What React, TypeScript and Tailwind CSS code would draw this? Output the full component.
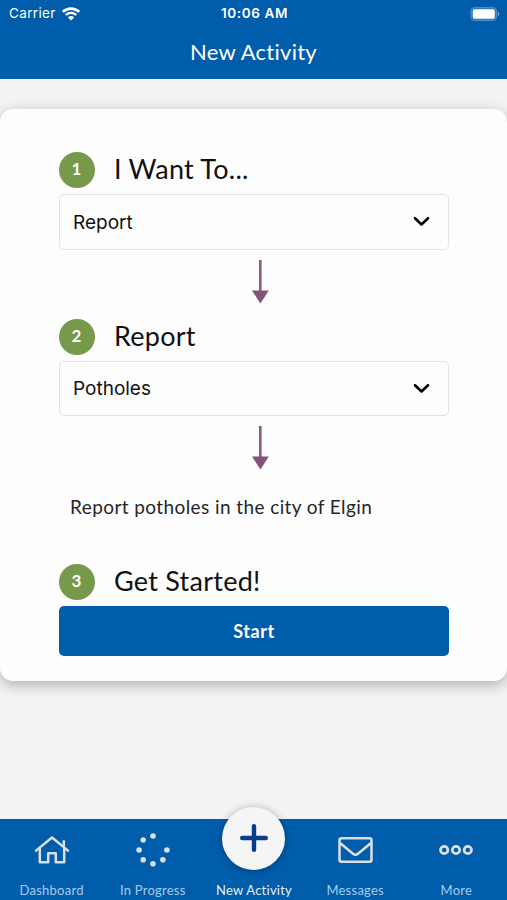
import type { ReactNode } from "react";

function StatusBar() {
  return (
    <div className="grid grid-cols-3 items-center h-7 pl-[9px] pr-[7px] font-['Inter',sans-serif] text-[13.5px] leading-none">
      <div className="flex items-center gap-1.5">
        <span className="w-[47px] whitespace-nowrap tracking-[0.35px]">Carrier</span>
        <svg width="18" height="14" viewBox="0 0 18 14" fill="none" stroke="#fff">
          <path d="M0.8 4.9a11.8 11.8 0 0 1 16.4 0" strokeWidth="2.6" />
          <path d="M3.8 8a7.5 7.5 0 0 1 10.4 0" strokeWidth="2.3" />
          <path d="M5.9 10.4a4.5 4.5 0 0 1 6.2 0L9 13.6z" fill="#fff" stroke="none" />
        </svg>
      </div>
      <span className="text-center font-semibold text-[13.5px] tracking-[0.6px]">10:06 AM</span>
      <svg className="justify-self-end" width="30" height="15" viewBox="0 0 30 15">
        <rect x="0.9" y="0.4" width="25.8" height="13.2" rx="3.8" fill="#2f7ac0" stroke="#5d99d0" strokeWidth="0.8" />
        <rect x="2.8" y="2.3" width="22" height="9.4" rx="1.6" fill="#fff" />
        <path d="M27.9 4.8v4.4c1.8-.6 1.8-3.8 0-4.4z" fill="#6da3d6" />
      </svg>
    </div>
  );
}

function StepTitle({ number, children }: { number: number; children: ReactNode }) {
  return (
    <div className="flex items-center h-9 gap-[19px]">
      <span className="flex items-center justify-center size-9 rounded-full bg-[#76994b] text-white text-[17px] font-bold pb-0.5 pr-px">
        {number}
      </span>
      <h2 className="text-[27px] leading-9 pb-0.5 tracking-[0.25px] whitespace-nowrap">{children}</h2>
    </div>
  );
}

function SelectBox({ value }: { value: string }) {
  return (
    <button className="flex items-center justify-between w-full h-[55.5px] pl-[13px] pr-[18px] mt-1.5 rounded-[5px] border-[1.5px] border-[#e4e4e4] font-['Inter',sans-serif] text-[19px]">
      <span className="pt-0.5">{value}</span>
      <svg width="17" height="11" viewBox="0 0 17 11" fill="none" stroke="#000" strokeWidth="2.6" strokeLinecap="round" strokeLinejoin="round">
        <path d="M2 2.2 8.5 8.5 15 2.2" />
      </svg>
    </button>
  );
}

function DownArrow() {
  return (
    <svg className="ml-[193px] mt-2.5" width="17" height="44" viewBox="0 0 17 44">
      <path d="M8.3 0v32" stroke="#8d5b80" strokeWidth="2.6" />
      <path d="M0 30.5h16.8L8.4 43.6z" fill="#87527a" />
    </svg>
  );
}

function Tab({ label, active, children }: { label: string; active?: boolean; children?: ReactNode }) {
  return (
    <div className={active ? "flex flex-col items-center text-[#e5effa]" : "flex flex-col items-center text-[#a9c9e9]"}>
      <div className="h-[62px] flex items-center justify-center">{children}</div>
      <span className="text-[13px] leading-[18px] whitespace-nowrap tracking-[0.25px]">{label}</span>
    </div>
  );
}

export default function App() {
  return (
    <div className="flex flex-col h-[900px] w-[507px] overflow-hidden bg-[#f3f3f3] text-[#111] font-['Lato',sans-serif]">
      <header className="h-[79px] shrink-0 bg-[#005dab] text-white">
        <StatusBar />
        <h1 className="text-center text-[22px] leading-[48px] tracking-[0.25px]">New Activity</h1>
      </header>

      <main className="flex-1 pt-[30px]">
        <section className="h-[572px] pt-[43px] pl-[59px] pr-[58px] rounded-[13px] bg-[#fdfdfd] shadow-[0_4px_14px_rgba(0,0,0,0.28)]">
          <StepTitle number={1}>I Want To...</StepTitle>
          <SelectBox value="Report" />
          <DownArrow />
          <div className="h-[15px]" />
          <StepTitle number={2}>Report</StepTitle>
          <SelectBox value="Potholes" />
          <DownArrow />
          <p className="mt-[23px] mb-[43px] ml-[11px] text-[19px] leading-7 tracking-[0.41px] text-[#262626]">
            Report potholes in the city of Elgin
          </p>
          <StepTitle number={3}>Get Started!</StepTitle>
          <button className="w-full h-[50px] mt-1.5 rounded-[5px] bg-[#005dab] text-white text-[18px] font-bold tracking-[0.6px]">
            Start
          </button>
        </section>
      </main>

      <nav className="grid grid-cols-5 h-[81px] shrink-0 pl-px bg-[#005dab]">
        <Tab label="Dashboard">
          <svg width="36" height="30" viewBox="0 0 36 30" fill="none" stroke="#dcdfe5" strokeWidth="2.5" strokeLinejoin="round" strokeLinecap="round">
            <path d="M2 15.6 18 2.5l16 13.1" />
            <path d="M5.8 13.5v13.7h8.4v-8.9h7.6v8.9h8.4V13.5" />
            <path d="M29.8 11V6.2" />
          </svg>
        </Tab>
        <Tab label="In Progress">
          <svg width="34" height="34" viewBox="0 0 34 34" fill="#dcdfe5">
            <circle cx="17" cy="3" r="2.8" />
            <circle cx="7.2" cy="7" r="2.8" />
            <circle cx="3.1" cy="17" r="2.8" />
            <circle cx="7.2" cy="26.8" r="2.8" />
            <circle cx="17" cy="30.8" r="2.8" />
            <circle cx="26.9" cy="26.8" r="2.8" />
            <circle cx="30.9" cy="17" r="2.8" />
          </svg>
        </Tab>
        <Tab label="New Activity" active>
          {/* raised action button */}
          <div className="relative -top-3 flex items-center justify-center size-[63px] shrink-0 rounded-full bg-[#f5f5f6] shadow-[0_1px_8px_rgba(0,0,0,0.3)]">
            <svg width="28" height="28" viewBox="0 0 28 28" stroke="#073d8c" strokeWidth="4.4" strokeLinecap="round">
              <path d="M14 2.2v23.6M2.2 14h23.6" />
            </svg>
          </div>
        </Tab>
        <Tab label="Messages">
          <svg width="35" height="26" viewBox="0 0 35 26" fill="none" stroke="#dcdfe5" strokeWidth="2.5" strokeLinejoin="round">
            <rect x="1.5" y="1.3" width="32" height="23.4" rx="2" />
            <path d="m2 6 13 10.8q2.5 2 5 0L33 6" />
          </svg>
        </Tab>
        <Tab label="More">
          <svg width="34" height="12" viewBox="0 0 34 12" fill="none" stroke="#dcdfe5" strokeWidth="2.7">
            <circle cx="5.2" cy="6" r="3.7" />
            <circle cx="17" cy="6" r="3.7" />
            <circle cx="28.8" cy="6" r="3.7" />
          </svg>
        </Tab>
      </nav>
    </div>
  );
}
